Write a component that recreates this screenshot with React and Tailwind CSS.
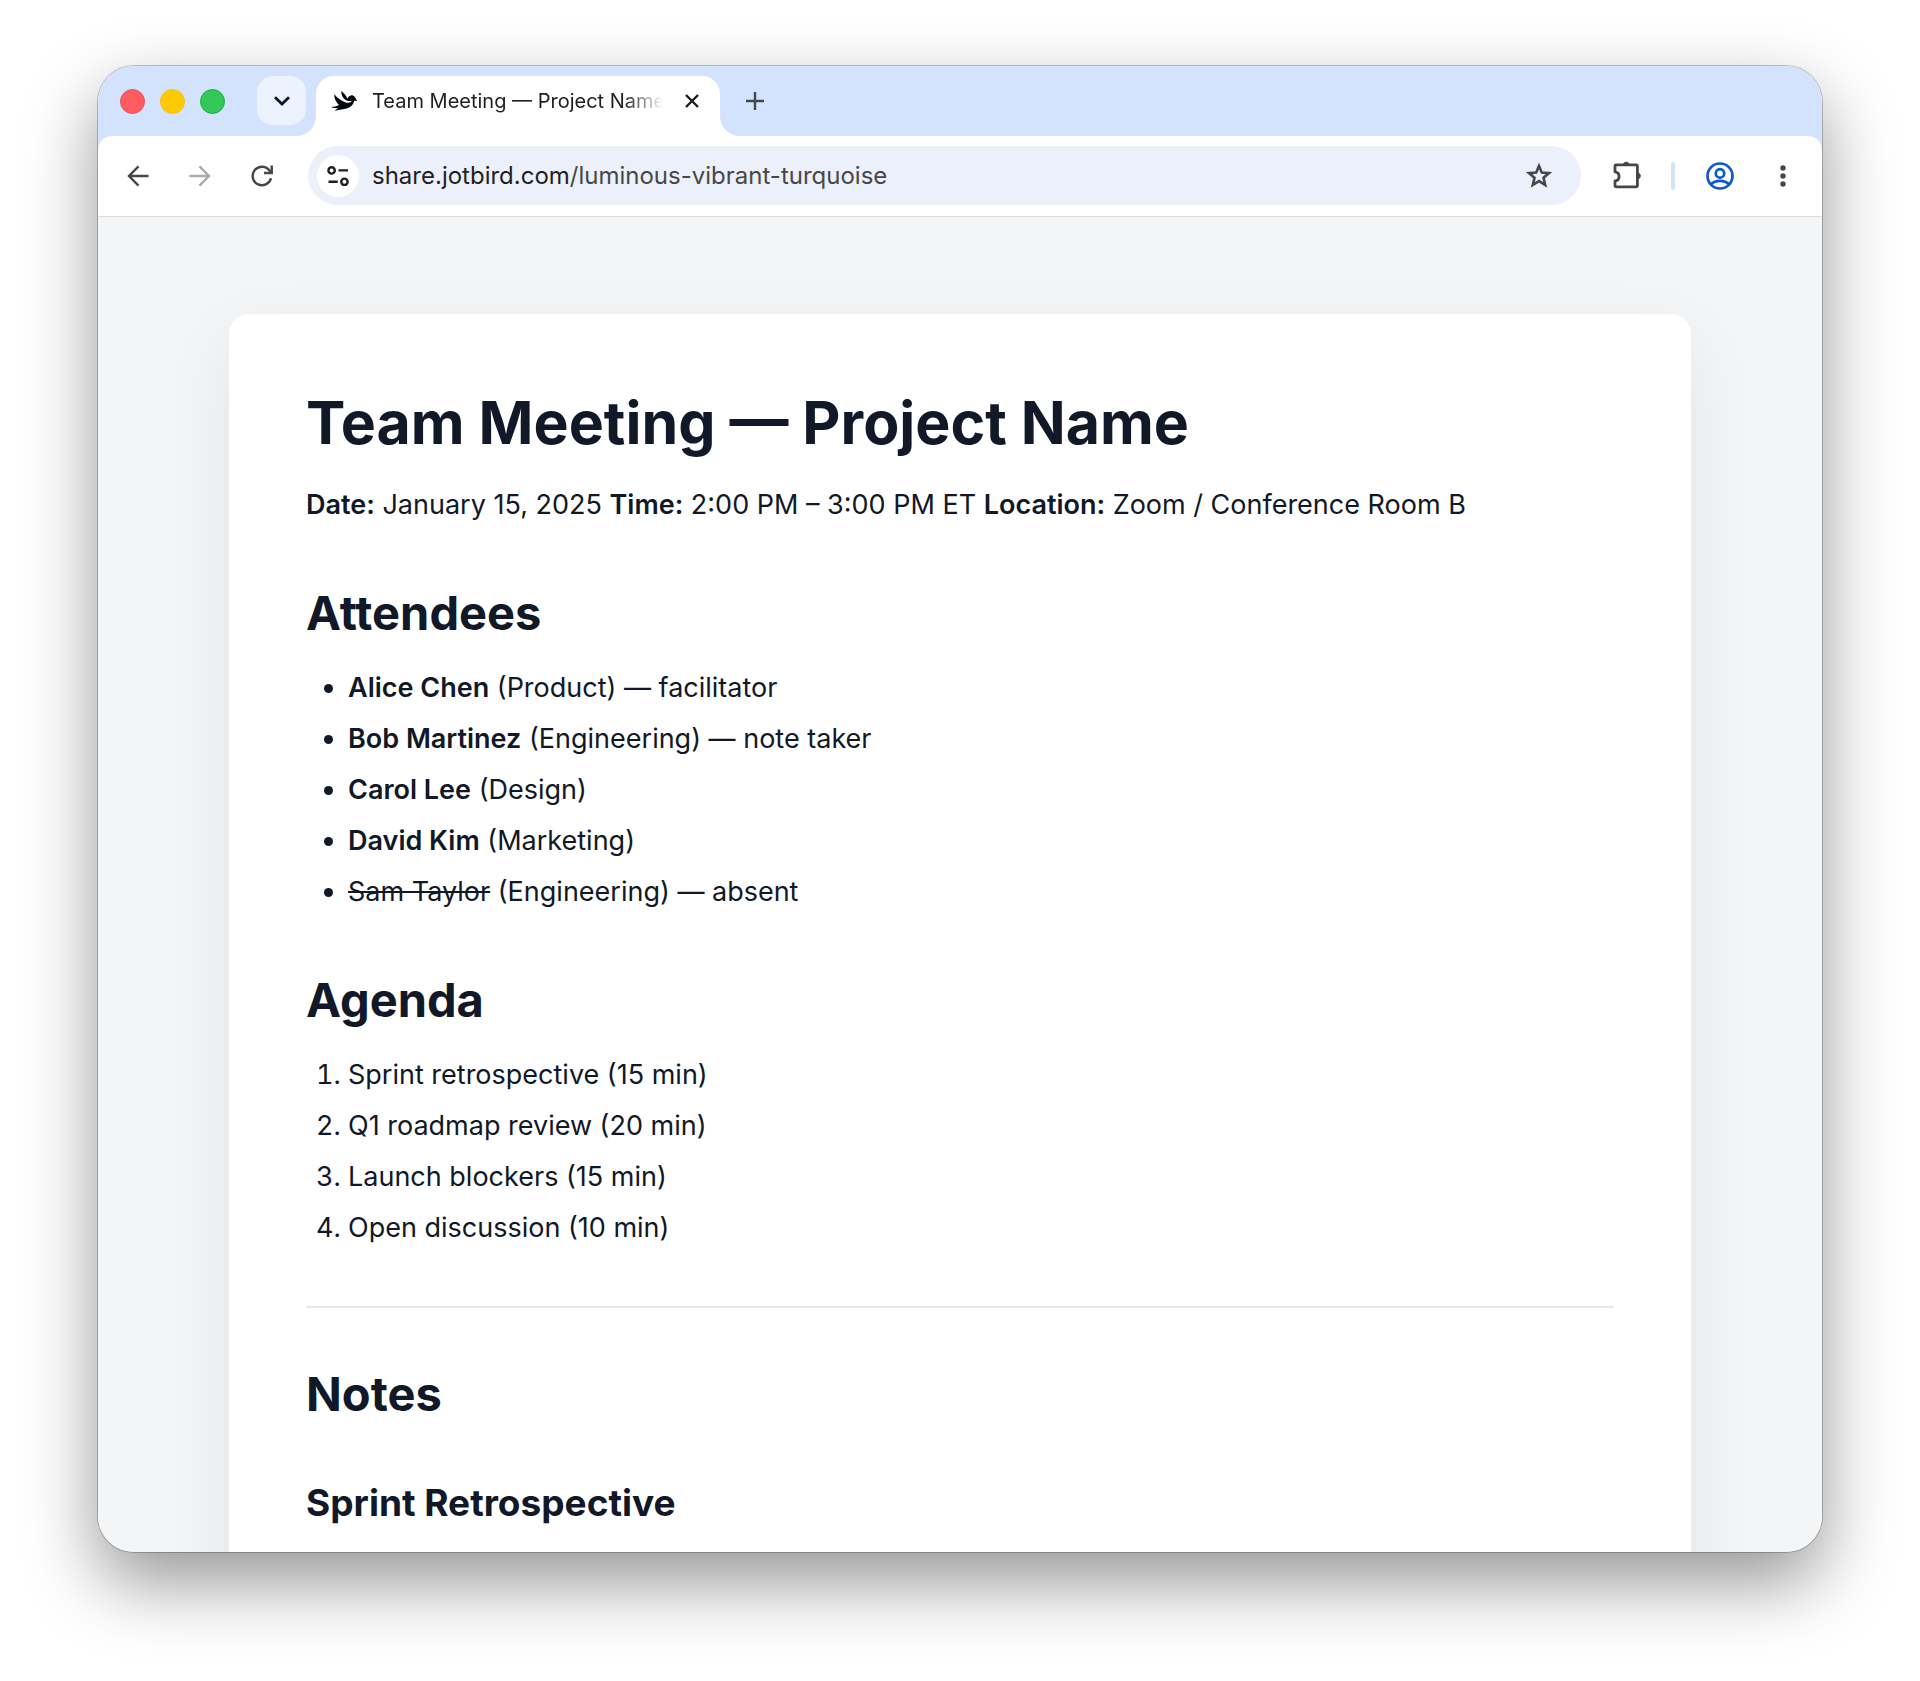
import React from 'react';

const attendees = [
  { name: 'Alice Chen', note: '(Product) — facilitator' },
  { name: 'Bob Martinez', note: '(Engineering) — note taker' },
  { name: 'Carol Lee', note: '(Design)' },
  { name: 'David Kim', note: '(Marketing)' },
  { name: 'Sam Taylor', note: '(Engineering) — absent', absent: true },
];

const agenda = [
  'Sprint retrospective (15 min)',
  'Q1 roadmap review (20 min)',
  'Launch blockers (15 min)',
  'Open discussion (10 min)',
];

const BirdIcon = () => (
  <svg viewBox="0 0 78 60" className="w-[26px] h-5 shrink-0" fill="#05080f" aria-hidden="true">
    <path d="M10 9 C15 18 24 23 33 29 C42 34 50 37 58 34 L70 28 C68 41 59 51 44 53 C33 54 22 58 10 59 C15 56 19 54 22 52 C14 52 7 51 0 48 C10 48 17 46 24 42 C15 34 9 23 10 9 Z" />
    <path d="M31 0 C36 5 44 9 49 23 C53 15 60 11 67 14 C72 16 74 21 78 30 L69 29 C62 33 53 32 45 28 C35 21 30 12 31 0 Z" />
    <path d="M33 25 C42 32 50 34 60 31" fill="none" stroke="#fff" strokeWidth="3" />
  </svg>
);

const TabStrip = () => (
  <div className="flex h-[70px] shrink-0 items-start bg-[#d3e3fd] pl-[22px] pt-[10px]">
    <div className="flex h-[50px] items-center gap-[15px]">
      <button aria-label="Close window" className="h-[25px] w-[25px] rounded-full border border-[#f24a50] bg-[#ff5c60]" />
      <button aria-label="Minimize window" className="h-[25px] w-[25px] rounded-full border border-[#f8c200] bg-[#fdc804]" />
      <button aria-label="Zoom window" className="h-[25px] w-[25px] rounded-full border border-[#0bb83a] bg-[#35c759]" />
    </div>
    <button aria-label="Search tabs" className="ml-8 flex h-[49px] w-[49px] items-center justify-center rounded-2xl bg-[#ecf2fe]">
      <svg viewBox="0 0 16 10" className="h-[10px] w-4" fill="none" stroke="#10182b" strokeWidth="2.8" aria-hidden="true">
        <path d="M1 1.2 L8 8 L15 1.2" />
      </svg>
    </button>
    <div className="relative ml-[10px] flex h-[60px] w-[404px] items-start rounded-t-[18px] bg-white pl-[15px]">
      {/* flared feet of the active tab */}
      <svg viewBox="0 0 20 20" className="absolute -left-5 bottom-0 h-5 w-5" fill="#fff" aria-hidden="true">
        <path d="M20 0 A20 20 0 0 1 0 20 H20 Z" />
      </svg>
      <svg viewBox="0 0 20 20" className="absolute -right-5 bottom-0 h-5 w-5" fill="#fff" aria-hidden="true">
        <path d="M0 0 A20 20 0 0 0 20 20 H0 Z" />
      </svg>
      <div className="flex h-[50px] min-w-0 flex-1 items-center">
        <BirdIcon />
        <span className="ml-[15px] w-[291px] overflow-hidden whitespace-nowrap text-xl text-[#1f1f1f] [mask-image:linear-gradient(to_right,black_252px,transparent_291px)]">
          Team Meeting — Project Name
        </span>
        <button aria-label="Close tab" className="ml-[22px] shrink-0">
          <svg viewBox="0 0 14 14" className="h-[14px] w-[14px]" fill="none" stroke="#1b1c1f" strokeWidth="2.4" aria-hidden="true">
            <path d="M1 1 L13 13 M13 1 L1 13" />
          </svg>
        </button>
      </div>
    </div>
    <button aria-label="New tab" className="ml-[26px] flex h-[50px] items-center">
      <svg viewBox="0 0 18 18" className="h-[18px] w-[18px]" fill="none" stroke="#474747" strokeWidth="2.4" aria-hidden="true">
        <path d="M9 0 V18 M0 9 H18" />
      </svg>
    </button>
  </div>
);

const Toolbar = () => (
  <div className="shrink-0 border-b border-[#dcdde0] bg-[#d3e3fd]">
    <div className="flex h-20 items-center rounded-t-[14px] bg-white pb-px pl-[29px] pr-[36px]">
      <button aria-label="Back">
        <svg viewBox="0 0 22 22" className="h-[22px] w-[22px]" fill="none" stroke="#474747" strokeWidth="2.4" aria-hidden="true">
          <path d="M21.5 11 H2 M11.5 1.3 L2 11 L11.5 20.7" />
        </svg>
      </button>
      <button aria-label="Forward" className="ml-10">
        <svg viewBox="0 0 22 22" className="h-[22px] w-[22px]" fill="none" stroke="#ababae" strokeWidth="2.4" aria-hidden="true">
          <path d="M0.5 11 H20 M10.5 1.3 L20 11 L10.5 20.7" />
        </svg>
      </button>
      <button aria-label="Reload" className="ml-10">
        <svg viewBox="0 0 22 22" className="h-[22px] w-[22px]" fill="none" stroke="#474747" strokeWidth="2.5" aria-hidden="true">
          <path d="M20 13.2 A9.3 9.3 0 1 1 18.6 5.6 L20.6 8" />
          <path d="M20.7 0.6 V8.1 H13" />
        </svg>
      </button>
      <div className="ml-[35px] flex h-[59px] flex-1 items-center rounded-full bg-[#ecf0fa] pl-[9px] pr-[29px]">
        <button aria-label="View site information" className="flex h-[42px] w-[42px] shrink-0 items-center justify-center rounded-full bg-white">
          <svg viewBox="0 0 22 20" className="h-5 w-[22px]" fill="none" stroke="#1f1f1f" strokeWidth="2.4" aria-hidden="true">
            <circle cx="4.6" cy="4.4" r="3.2" />
            <circle cx="17.4" cy="15.8" r="3.2" />
            <path d="M11.5 4.4 H21 M1.5 15.8 H10.8" />
          </svg>
        </button>
        <a href="https://share.jotbird.com/luminous-vibrant-turquoise" className="ml-[13px] flex-1 text-2xl text-[#474747]">
          <span className="text-[#1f1f1f]">share.jotbird.com</span>/luminous-vibrant-turquoise
        </a>
        <button aria-label="Bookmark this page">
          <svg viewBox="0 0 26 25" className="h-[25px] w-[26px]" fill="none" stroke="#474747" strokeWidth="2.6" aria-hidden="true">
            <path d="M13 2.9 L15.8 9.5 L23 10.1 L17.5 14.8 L19.2 21.9 L13 18.1 L6.8 21.9 L8.5 14.8 L3 10.1 L10.2 9.5 Z" />
          </svg>
        </button>
      </div>
      <button aria-label="Extensions" className="ml-8">
        <svg viewBox="0 0 29 29" className="h-[29px] w-[29px]" fill="none" stroke="#474747" strokeWidth="2.8" strokeLinejoin="round" aria-hidden="true">
          <path d="M3 3.8 H23 Q24.4 3.8 24.4 5.2 V24.5 Q24.4 25.9 23 25.9 H3.4 Q2 25.9 2 24.5 V20 C7.4 19.3 7.4 11.5 2 10.8 V4.8 Q2 3.8 3 3.8 Z" />
          <path d="M10.2 3.5 A3.1 3.1 0 0 1 16.2 3.5 Z M25 11.9 A3.1 3.1 0 0 1 25 17.9 Z" fill="#474747" strokeWidth="1" />
        </svg>
      </button>
      <div className="ml-[29px] h-7 w-1 rounded-full bg-[#d3e3fd]" />
      <button aria-label="Profile" className="ml-[31px]">
        <svg viewBox="0 0 28 28" className="h-7 w-7" fill="none" stroke="#0b57d0" strokeWidth="2.7" aria-hidden="true">
          <circle cx="14" cy="14" r="12.5" />
          <circle cx="14" cy="11.4" r="4.2" />
          <path d="M4.9 22.3 C9.4 17.7 18.6 17.7 23.1 22.3" />
        </svg>
      </button>
      <button aria-label="Menu" className="ml-[46px]">
        <svg viewBox="0 0 6 22" className="h-[22px] w-[6px]" fill="#474747" aria-hidden="true">
          <circle cx="3" cy="3" r="2.7" />
          <circle cx="3" cy="11" r="2.7" />
          <circle cx="3" cy="19" r="2.7" />
        </svg>
      </button>
    </div>
  </div>
);

const Note = () => (
  <article className="rounded-t-[20px] bg-white px-[77px] pb-20 pt-[72px] text-[27px] leading-[51px] text-[#111827] shadow-[0_24px_72px_rgba(0,0,0,0.07)]">
    <h1 className="text-[59px] font-bold leading-[74px]">Team Meeting — Project Name</h1>
    <p className="mt-[19px]">
      <strong className="font-semibold">Date:</strong> January 15, 2025{' '}
      <strong className="font-semibold">Time:</strong> 2:00 PM – 3:00 PM ET{' '}
      <strong className="font-semibold">Location:</strong> Zoom / Conference Room B
    </p>

    <h2 className="mt-[53px] text-[47px] font-bold leading-[60px]">Attendees</h2>
    <ul className="mt-[19px] list-disc pl-[42px]">
      {attendees.map(({ name, note, absent }) => (
        <li key={name}>
          {absent ? <del>{name}</del> : <strong className="font-semibold">{name}</strong>} {note}
        </li>
      ))}
    </ul>

    <h2 className="mt-[53px] text-[47px] font-bold leading-[60px]">Agenda</h2>
    <ol className="mt-[19px] list-decimal pl-[42px]">
      {agenda.map((item) => (
        <li key={item}>{item}</li>
      ))}
    </ol>

    <hr className="mt-[53px] border-t-2 border-[#e5e7eb]" />

    <h2 className="mt-[56px] text-[47px] font-bold leading-[60px]">Notes</h2>
    <h3 className="mt-[53px] text-[37px] font-bold leading-[51px]">Sprint Retrospective</h3>
  </article>
);

export default function App() {
  return (
    <div className="h-screen bg-white px-[98px] pb-[129px] pt-[66px] font-['Inter',sans-serif]">
      <div className="flex h-full flex-col overflow-hidden rounded-[36px] shadow-[0_0_0_1px_rgba(0,0,0,0.22),0_30px_72px_rgba(0,0,0,0.42)]">
        <TabStrip />
        <Toolbar />
        <main className="min-h-0 flex-1 overflow-hidden bg-[#f4f5f7] px-[131px] pt-[97px]">
          <Note />
        </main>
      </div>
    </div>
  );
}
